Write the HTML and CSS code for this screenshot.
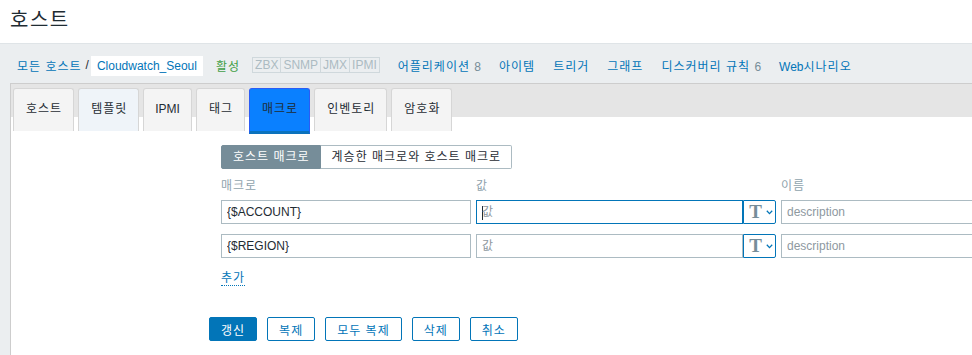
FILE: index.html
```html
<!DOCTYPE html>
<html>
<head>
    <title>호스트</title>
    <link rel="stylesheet" href="styles.css">
</head>
<body>
    <div class="header"><h1>호스트</h1></div>

    <ul class="host-nav">
        <li class="crumb-link"><a href="#">모든 호스트</a></li>
        <li class="crumb-sep">/</li>
        <li class="crumb-current latin"><a href="#">Cloudwatch_Seoul</a></li>
        <li class="status-on">활성</li>
        <li class="avail latin">
            <span>ZBX</span><span>SNMP</span><span>JMX</span><span>IPMI</span>
        </li>
        <li class="nav-link"><a href="#">어플리케이션</a> <span class="count">8</span></li>
        <li class="nav-link"><a href="#">아이템</a></li>
        <li class="nav-link"><a href="#">트리거</a></li>
        <li class="nav-link"><a href="#">그래프</a></li>
        <li class="nav-link"><a href="#">디스커버리 규칙</a> <span class="count">6</span></li>
        <li class="nav-link"><a href="#"><span class="latin">Web</span>시나리오</a></li>
    </ul>

    <div class="content">
        <ul class="tab-nav">
            <li class="tab">호스트</li>
            <li class="tab hover">템플릿</li>
            <li class="tab latin">IPMI</li>
            <li class="tab">태그</li>
            <li class="tab active">매크로</li>
            <li class="tab">인벤토리</li>
            <li class="tab">암호화</li>
        </ul>

        <div class="panel">
            <div class="fields">
                <div class="sub-tabs">
                    <span class="sub-tab selected">호스트 매크로</span>
                    <span class="sub-tab">계승한 매크로와 호스트 매크로</span>
                </div>

                <div class="macro-table">
                    <div class="col-label">매크로</div>
                    <div class="col-label">값</div>
                    <div class="col-label">이름</div>

                    <input class="text-field latin" type="text" value="{$ACCOUNT}">
                    <div class="value-field">
                        <input class="text-field is-focused" type="text" placeholder="값">
                        <button class="type-btn"><span class="type-t">T</span>
                            <svg width="7" height="5" viewBox="0 0 7 5"><polyline points="0.8,0.8 3.5,3.6 6.2,0.8" fill="none" stroke="#0275b8" stroke-width="1.3"/></svg>
                        </button>
                    </div>
                    <input class="text-field latin" type="text" placeholder="description">

                    <input class="text-field latin" type="text" value="{$REGION}">
                    <div class="value-field">
                        <input class="text-field" type="text" placeholder="값">
                        <button class="type-btn"><span class="type-t">T</span>
                            <svg width="7" height="5" viewBox="0 0 7 5"><polyline points="0.8,0.8 3.5,3.6 6.2,0.8" fill="none" stroke="#0275b8" stroke-width="1.3"/></svg>
                        </button>
                    </div>
                    <input class="text-field latin" type="text" placeholder="description">
                </div>

                <a href="#" class="add-link">추가</a>
            </div>

            <div class="form-buttons">
                <button class="btn primary">갱신</button>
                <button class="btn">복제</button>
                <button class="btn">모두 복제</button>
                <button class="btn">삭제</button>
                <button class="btn">취소</button>
            </div>
        </div>
    </div>
</body>
</html>
```

FILE: styles.css
```css
/* General */
body {
    margin: 0;
    background: #ebeef0;
    font-family: "Liberation Sans", "Noto Sans CJK KR", sans-serif;
    font-size: 12px;
    letter-spacing: 1px;
    color: #1f2c33;
    overflow: hidden;
}

.latin {
    letter-spacing: 0;
}

a {
    color: #0275b8;
    text-decoration: none;
}

/* Header */
.header {
    background: #fff;
    height: 44px;
    box-sizing: border-box;
    border-bottom: 1px solid #dfe4e7;
    padding: 10px 10px 0;
}

.header h1 {
    margin: 0;
    font-size: 20px;
    font-weight: normal;
    line-height: 20px;
    letter-spacing: 1.5px;
}

/* Host navigation */
.host-nav {
    list-style: none;
    margin: 0;
    padding: 3px 0 0 17px;
    height: 39px;
    box-sizing: border-box;
    display: flex;
    align-items: center;
    white-space: nowrap;
}

.crumb-link {
    margin-right: 4px;
}

.crumb-sep {
    margin-right: 1px;
}

.crumb-current {
    background: #fff;
    height: 20px;
    line-height: 20px;
    padding: 0 6px;
    margin-top: 2px;
    margin-right: 13px;
}

.status-on {
    color: #429e47;
    margin-right: 13px;
}

.avail {
    display: flex;
    margin-right: 18px;
}

.avail span {
    border: 1px solid #cfd8dc;
    color: #acbbc2;
    padding: 0 2px;
    line-height: 14px;
    margin-left: -1px;
}

.nav-link {
    margin-right: 18px;
}

.count {
    color: #768d99;
    letter-spacing: 0;
}

/* Content box with tabs */
.content {
    margin-left: 10px;
    border-top: 1px solid #cdcdcd;
    border-left: 1px solid #cdcdcd;
    background: #fff;
    height: 300px;
}

.tab-nav {
    list-style: none;
    margin: 0;
    padding: 4px 0 0 2px;
    height: 47px;
    box-sizing: border-box;
    display: flex;
    align-items: flex-start;
    gap: 4px;
    background: linear-gradient(#e5e5e5 0, #e5e5e5 33px, #fff 33px);
}

.tab {
    height: 43px;
    box-sizing: border-box;
    padding: 0 11px 0 12px;
    line-height: 41px;
    border: 1px solid #d6d6d6;
    border-bottom: none;
    border-radius: 3px 3px 0 0;
    background: #f4f4f4;
}

.tab.latin {
    padding: 0 11px;
}

.tab.hover {
    background: #eff4f9;
}

.tab.active {
    height: 46px;
    background: #0a80ff;
    border-color: #2b5cf5;
    border-bottom: 3px solid #0b72bd;
}

/* Macro form */
.panel {
    padding: 14px 0 0 198px;
}

.fields {
    margin-left: 12px;
}

.sub-tabs {
    display: flex;
    margin-bottom: 8px;
}

.sub-tab {
    height: 24px;
    box-sizing: border-box;
    line-height: 22px;
    padding: 0 10px 0 11px;
    border: 1px solid #acbbc2;
    border-left: none;
    background: #fff;
    border-radius: 0 2px 2px 0;
}

.sub-tab.selected {
    background: #768d99;
    border: 1px solid #768d99;
    color: #fff;
    border-radius: 2px 0 0 2px;
}

.macro-table {
    display: grid;
    grid-template-columns: 250px 300px 250px;
    column-gap: 5px;
}

.col-label {
    color: #8fa3ad;
    line-height: 18px;
    margin-bottom: 5px;
}

.text-field {
    height: 24px;
    box-sizing: border-box;
    border: 1px solid #acbbc2;
    padding: 0 5px;
    margin: 0 0 10px;
    font-family: inherit;
    font-size: 12px;
    color: #1f2c33;
    background: #fff;
    outline: none;
    min-width: 0;
}

.text-field::placeholder {
    color: #8e999f;
}

.text-field.is-focused {
    border-color: #0275b8;
    background: linear-gradient(#1f2c33, #1f2c33) no-repeat 5px 5px / 1px 14px, #fff;
}

.value-field {
    display: flex;
}

.value-field .text-field {
    flex: 1;
}

.type-btn {
    width: 33px;
    height: 24px;
    box-sizing: border-box;
    border: 1px solid #0275b8;
    border-radius: 0 2px 2px 0;
    background: #fff;
    padding: 0 0 0 3px;
    display: flex;
    align-items: center;
    justify-content: center;
    gap: 4px;
}

.type-t {
    font-family: "Liberation Serif", serif;
    font-weight: bold;
    font-size: 19px;
    line-height: 20px;
    color: #768d99;
    letter-spacing: 0;
}

.add-link {
    display: inline-block;
    margin-top: 3px;
    line-height: 14px;
    border-bottom: 1px dotted #0275b8;
}

/* Buttons */
.form-buttons {
    display: flex;
    gap: 10px;
    margin-top: 31px;
}

.btn {
    height: 24px;
    padding: 0 11px;
    border: 1px solid #0275b8;
    border-radius: 2px;
    background: #fff;
    color: #0275b8;
    font-family: inherit;
    font-size: 12px;
    letter-spacing: 1px;
}

.btn.primary {
    background: #0275b8;
    color: #fff;
}
```
